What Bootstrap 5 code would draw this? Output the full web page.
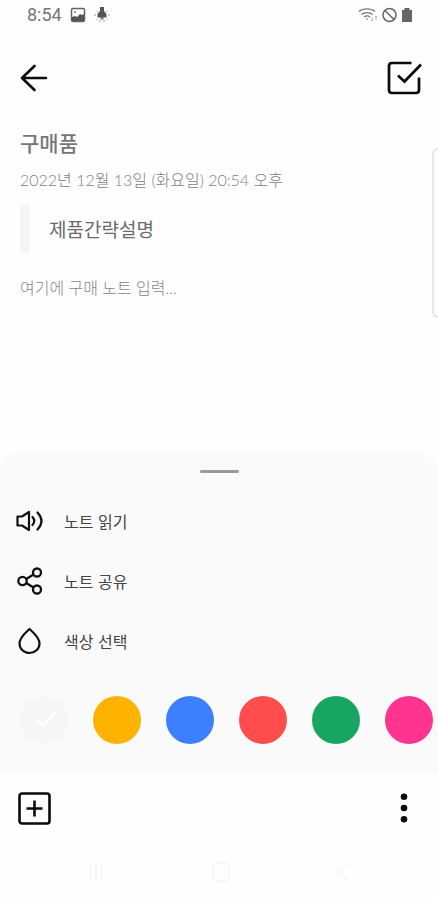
<!DOCTYPE html>
<html lang="ko">
<head>
<meta charset="utf-8">
<meta name="viewport" content="width=device-width, initial-scale=1">
<title>구매품</title>
<link href="https://cdn.jsdelivr.net/npm/bootstrap@5.3.0/dist/css/bootstrap.min.css" rel="stylesheet">
<style>
  body { font-family: "Noto Sans CJK KR", "Noto Sans", sans-serif; background: #fefefe; color: #111; overflow-x: hidden; }
  svg { display: block; flex: none; }
  .status { height: 30px; padding: 0 25px 0 27px; font: 18px/30px Roboto, sans-serif; color: #777; }
  .topbar { height: 96px; padding: 0 16px 0 20px; }
  .plain { background: none; border: 0; padding: 0; color: #0b0b0b; }
  .field { display: block; width: 100%; border: 0; padding: 0; background: none; outline-offset: 4px; resize: none; }
  .note { padding: 0 20px; }
  .note-title { font-size: 21px; line-height: 32px; font-weight: 500; color: #767676; }
  .note-date { font-family: Lato, "Noto Sans CJK KR", sans-serif; font-size: 16px; line-height: 24px; margin: 10px 0 13px; font-weight: 300; color: #808080; }
  .note-quote { border-left: 10px solid #f5f5f5; border-radius: 2px; padding-left: 19px; margin-bottom: 23px; }
  .note-quote .field { font-size: 19px; line-height: 48px; font-weight: 400; color: #6a6a6a; }
  .note-body { font-family: Lato, "Noto Sans CJK KR", sans-serif; font-size: 16px; line-height: 24px; font-weight: 300; }
  .note-body::placeholder { color: #868686; opacity: 1; }
  .edge-panel { position: absolute; right: 0; top: 148px; width: 6px; height: 170px; border: 2px solid #e6e6e6; border-right: 0; border-radius: 7px 0 0 7px; }
  .sheet { background: #fafafa; border-radius: 24px 24px 0 0; padding: 20px 0 30px; }
  .grip { width: 39px; height: 3px; background: #9a9a9a; border-radius: 2px; }
  .sheet-menu { padding: 18px 16px 0; }
  .sheet-menu .plain { display: flex; width: 100%; align-items: center; gap: 20px; height: 60px; font-size: 16px; color: #444; text-align: left; }
  .swatches { gap: 25px; padding: 0 20px; margin-top: 25px; overflow: hidden; }
  .swatch { appearance: none; width: 48px; height: 48px; margin: 0; border-radius: 50%; flex: none; background-color: var(--tone); }
  .swatch-pick { width: 48px; height: 48px; flex: none; }
  .swatch-pick svg { position: absolute; left: 14px; top: 14px; pointer-events: none; display: none; }
  .swatch:checked + svg { display: block; }
  .toolbar { height: 68px; padding: 0 18px; }
  .sysnav { height: 58px; padding: 2px 84px 0; color: #f5f5f5; }
</style>
<script src="https://cdn.jsdelivr.net/npm/bootstrap@5.3.0/dist/js/bootstrap.bundle.min.js"></script>
</head>
<body>
<div class="d-flex flex-column min-vh-100 position-relative">
  <div class="status d-flex align-items-center">
    <span>8:54</span>
    <svg class="ms-2" width="16" height="16" viewBox="0 0 16 16"><rect x="1.5" y="1.5" width="13" height="13" rx="1.5" fill="#fff" stroke="#666" stroke-width="1.5"/><path d="M2 14v-4l3-1 2 1 3-3 2 1 2-1v7z" fill="#555"/><circle cx="5" cy="5" r="1" fill="#777"/></svg>
    <svg class="ms-2" width="16" height="16" viewBox="0 0 16 16"><path d="M6 0h4v4l2.500 3v3.500h-9V7L6 4z" fill="#555"/><path d="M6.500 10h3v2.500h-3z" fill="#777"/><path d="M0 8h2M14 8h2M2.500 13l1-1M13.500 13l-1-1M6 13v2M10 13v2M3 4l1 1M13 4l-1 1" stroke="#999"/></svg>
    <svg class="ms-auto" width="20" height="16" viewBox="0 0 20 16" fill="none" stroke="#777" stroke-width="1.300"><path d="M1 4.500C5 1 13 1 17 4.500M3.500 7.500c3-2.500 8-2.500 11 0M6 10c2-1.500 4-1.500 6 0"/><circle cx="9" cy="12" r=".8" fill="#666" stroke="none"/><path d="M14 10v4m-1-1 1 1 1-1M18 13V9m-1 1 1-1 1 1" stroke="#aaa" stroke-width=".8"/></svg>
    <svg class="ms-1" width="15" height="16" viewBox="0 0 15 16" fill="none" stroke="#666" stroke-width="1.500"><circle cx="7.500" cy="8" r="6.500"/><path d="m3 3.500 9 9"/></svg>
    <svg class="ms-1" width="12" height="16" viewBox="0 0 12 16"><path d="M3.500 1h5v2H11v12H1V3h2.500z" fill="#666"/></svg>
  </div>

  <header class="topbar d-flex align-items-center justify-content-between">
    <button class="plain" type="button" aria-label="뒤로"><svg width="28" height="28" viewBox="0 0 28 28" fill="none" stroke="currentColor" stroke-width="2.600" stroke-linecap="round" stroke-linejoin="round"><path d="M26 14H2M14.500 2 2 14l12.500 12"/></svg></button>
    <button class="plain" type="button" aria-label="저장"><svg width="36" height="36" viewBox="0 0 36 36" fill="none" stroke="currentColor" stroke-width="2.700" stroke-linejoin="round"><path d="M25.500 3H6Q3 3 3 6v24q0 3 3 3h24q3 0 3-3V17.500"/><path d="m12 15.500 6.500 6L35 4.500" stroke-linejoin="miter"/></svg></button>
  </header>

  <main class="note">
    <input class="field note-title" type="text" aria-label="제목" value="구매품">
    <p class="note-date">2022년 12월 13일 (화요일) 20:54 오후</p>
    <div class="note-quote"><input class="field" type="text" aria-label="설명" value="제품간략설명"></div>
    <textarea class="field note-body" rows="3" aria-label="노트" placeholder="여기에 구매 노트 입력..."></textarea>
  </main>
  <div class="edge-panel"></div>

  <section class="sheet mt-auto">
    <div class="grip mx-auto"></div>
    <div class="sheet-menu">
      <button class="plain" type="button"><svg width="28" height="28" viewBox="0 0 28 28" fill="none" stroke="#111" stroke-width="2.200" stroke-linejoin="round"><path d="M1.500 9.500H6L13 5v18l-7-4.500H1.500z"/><path d="M16.500 10q3.500 4 0 8M21.500 5.500q8 8.500 0 17" stroke-linecap="round"/></svg>노트 읽기</button>
      <button class="plain" type="button"><svg width="28" height="28" viewBox="0 0 28 28" fill="none" stroke="#111" stroke-width="2.300"><circle cx="6.500" cy="14" r="4.200"/><circle cx="21" cy="5.500" r="4"/><circle cx="21" cy="22.500" r="4"/><path d="m10.200 12 7.300-4.400M10.200 16l7.300 4.500"/></svg>노트 공유</button>
      <button class="plain" type="button"><svg width="28" height="28" viewBox="0 0 28 28" fill="none" stroke="#111" stroke-width="2.200" stroke-linejoin="round"><path d="M13.500 2C10 5.500 3.500 10 3.500 16.500a10 9.500 0 0 0 20 0C23.500 10 17 5.500 13.500 2z"/></svg>색상 선택</button>
    </div>
    <div class="swatches d-flex" role="radiogroup" aria-label="색상 선택">
      <label class="swatch-pick position-relative"><input class="swatch" style="--tone:#f6f6f6" type="radio" name="tone" aria-label="회색" checked><svg width="24" height="20" viewBox="0 0 24 20" fill="none" stroke="#fff" stroke-width="3"><path d="m3 10 6 5L21 3"/></svg></label>
      <input class="swatch" style="--tone:#ffb300" type="radio" name="tone" aria-label="노랑">
      <input class="swatch" style="--tone:#3c80ff" type="radio" name="tone" aria-label="파랑">
      <input class="swatch" style="--tone:#ff4d4d" type="radio" name="tone" aria-label="빨강">
      <input class="swatch" style="--tone:#17a562" type="radio" name="tone" aria-label="초록">
      <input class="swatch" style="--tone:#ff3490" type="radio" name="tone" aria-label="분홍">
    </div>
  </section>

  <footer>
    <div class="toolbar d-flex align-items-center justify-content-between">
      <button class="plain" type="button" aria-label="추가"><svg width="33" height="33" viewBox="0 0 33 33" fill="none" stroke="currentColor" stroke-width="2.600"><rect x="1.500" y="1.500" width="30" height="30" rx="2.500"/><path d="M16.500 8.500v16M8.500 16.500h16"/></svg></button>
      <button class="plain" type="button" aria-label="더보기"><svg width="32" height="32" viewBox="0 0 32 32" fill="currentColor"><circle cx="16" cy="4.700" r="3.300"/><circle cx="16" cy="16" r="3.300"/><circle cx="16" cy="27.300" r="3.300"/></svg></button>
    </div>
    <div class="sysnav d-flex align-items-center justify-content-between">
      <button class="plain text-reset" type="button" aria-label="최근 앱"><svg width="24" height="20" viewBox="0 0 24 20" stroke="currentColor" stroke-width="1.500"><path d="M6 1v18M12 1v18M18 1v18"/></svg></button>
      <button class="plain text-reset" type="button" aria-label="홈"><svg width="20" height="20" viewBox="0 0 20 20" fill="none" stroke="currentColor" stroke-width="1.500"><rect x="2" y="1" width="16" height="18" rx="4"/></svg></button>
      <button class="plain text-reset" type="button" aria-label="뒤로 가기"><svg width="20" height="20" viewBox="0 0 20 20" fill="none" stroke="currentColor" stroke-width="1.500"><path d="M15 1 5 10l10 9"/></svg></button>
    </div>
  </footer>
</div>
</body>
</html>
